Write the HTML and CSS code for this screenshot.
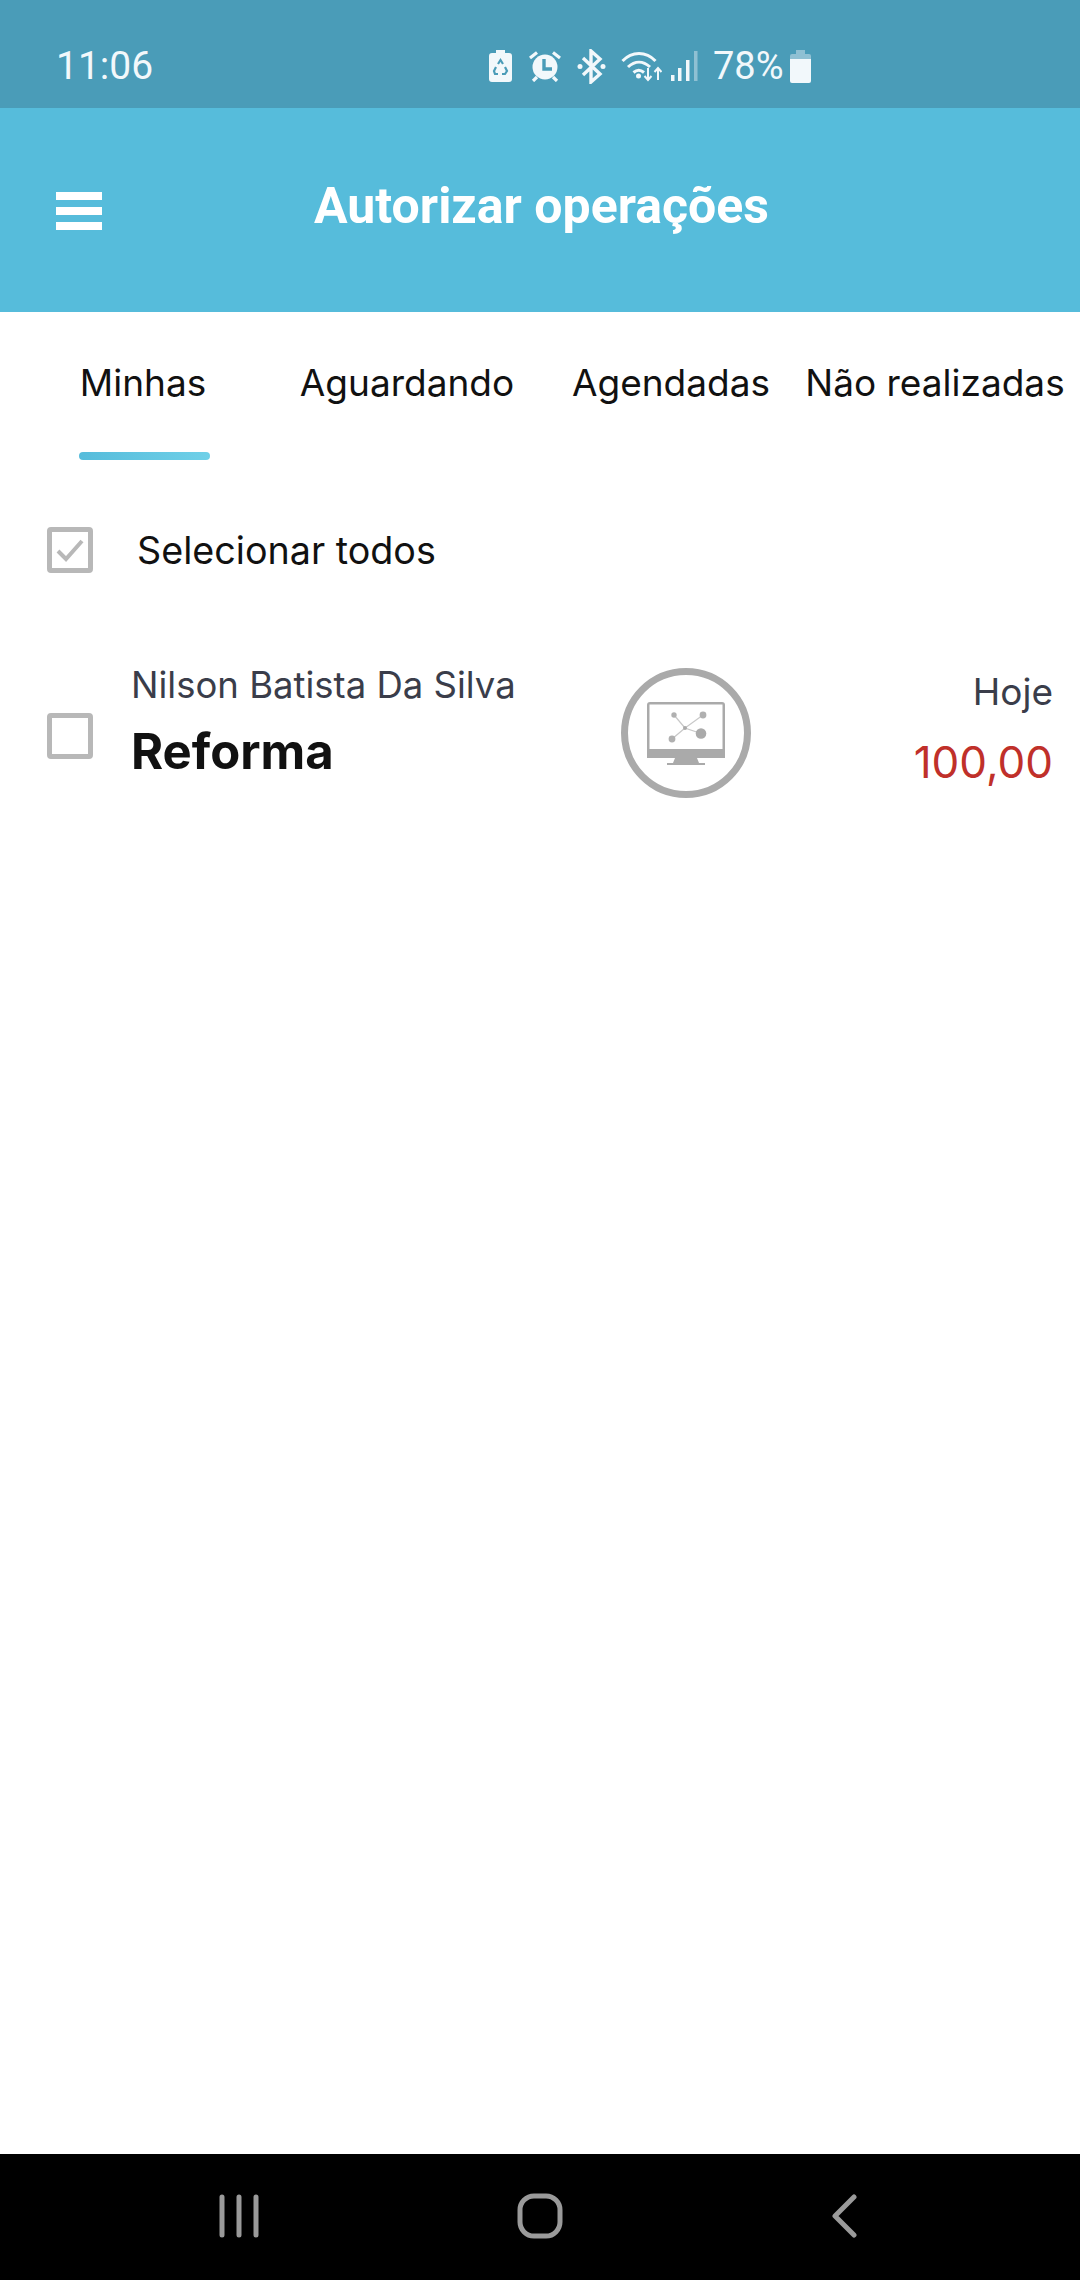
FILE: index.html
```html
<!DOCTYPE html>
<html lang="pt">
<head>
    <meta charset="UTF-8">
    <meta name="viewport" content="width=device-width, initial-scale=1.0">
    <title>Autorizar operações</title>
    <link rel="stylesheet" href="styles.css">
</head>
<body>

    <!-- Status bar -->
    <div class="status-bar">
        <span class="status-time">11:06</span>
        <div class="status-icons">
            <svg class="icon-recycle" width="23" height="32" viewBox="0 0 23 32">
                <path d="M7 0h9v3h4a3 3 0 0 1 3 3v23a3 3 0 0 1-3 3H3a3 3 0 0 1-3-3V6a3 3 0 0 1 3-3h4z" fill="#f2f8fb"/>
                <path d="M9 14l2.500-4 2.500 4M16 17l2 4-2 3h-3M9 24H6l-1-3 2-4" stroke="#4a9cb8" stroke-width="2.200" fill="none"/>
            </svg>
            <svg class="icon-alarm" width="34" height="31" viewBox="0 0 34 31">
                <circle cx="17" cy="16" r="12.500" fill="#f2f8fb"/>
                <path d="M16 8v10h8" stroke="#4a9cb8" stroke-width="3.400" fill="none"/>
                <path d="M2 7l7-5.500M32 7l-7-5.500M9 26l-4 4M25 26l4 4" stroke="#f2f8fb" stroke-width="3.200" fill="none"/>
            </svg>
            <svg class="icon-bt" width="29" height="35" viewBox="0 0 29 35">
                <path d="M6 9l17 16-9 8V2l9 8L6 26" stroke="#f2f8fb" stroke-width="3.400" fill="none"/>
                <circle cx="3" cy="17.500" r="2.500" fill="#f2f8fb"/>
                <circle cx="26" cy="17.500" r="2.500" fill="#f2f8fb"/>
            </svg>
            <svg class="icon-wifi" width="41" height="32" viewBox="0 0 41 32">
                <path d="M1.500 11C11 1 25 1 34.500 11M7 17c7-6.500 15-6.500 22 0M12.500 22.500c3.500-3 7-3 10.500 0" stroke="#f2f8fb" stroke-width="3" fill="none"/>
                <circle cx="17.500" cy="26" r="2.500" fill="#f2f8fb"/>
                <path d="M27 18v12M23.500 26l3.500 4 3.500-4M37 30V18M33.500 22l3.500-4 3.500 4" stroke="#f2f8fb" stroke-width="2" fill="none"/>
            </svg>
            <svg class="icon-signal" width="27" height="30" viewBox="0 0 27 30">
                <rect x="0" y="24" width="3.500" height="6" fill="#f2f8fb"/>
                <rect x="7" y="17" width="3.500" height="13" fill="#f2f8fb"/>
                <rect x="15" y="9" width="3.500" height="21" fill="#f2f8fb"/>
                <rect x="23" y="0" width="3.500" height="30" fill="#8fc0d3"/>
            </svg>
            <span class="status-percent">78%</span>
            <svg class="icon-battery" width="21" height="33" viewBox="0 0 21 33">
                <path d="M6 0h9v4H6z" fill="#8fc0d3"/>
                <path d="M2 4h17a2 2 0 0 1 2 2v3H0V6a2 2 0 0 1 2-2z" fill="#8fc0d3"/>
                <path d="M0 9h21v22a2 2 0 0 1-2 2H2a2 2 0 0 1-2-2z" fill="#f2f8fb"/>
            </svg>
        </div>
    </div>

    <!-- App bar -->
    <div class="app-bar">
        <div class="menu-icon">
            <span></span>
            <span></span>
            <span></span>
        </div>
        <h1>Autorizar operações</h1>
    </div>

    <!-- Tabs -->
    <div class="tabs">
        <div class="tab active">Minhas</div>
        <div class="tab">Aguardando</div>
        <div class="tab">Agendadas</div>
        <div class="tab">Não realizadas</div>
    </div>

    <div class="content">
        <div class="select-all">
            <div class="checkbox">
                <svg width="30" height="26" viewBox="0 0 30 26">
                    <path d="M3 14l8 8L27 4" stroke="#b8b8b8" stroke-width="4" fill="none"/>
                </svg>
            </div>
            <span>Selecionar todos</span>
        </div>

        <div class="operation">
            <div class="checkbox"></div>
            <div class="operation-text">
                <div class="operation-name">Nilson Batista Da Silva</div>
                <div class="operation-title">Reforma</div>
            </div>
            <div class="operation-icon">
                <svg width="78" height="63" viewBox="0 0 78 63">
                    <path d="M3 0h72a3 3 0 0 1 3 3v53H0V3a3 3 0 0 1 3-3z" fill="#aaa"/>
                    <rect x="2.500" y="2.500" width="73" height="44.500" fill="#fff"/>
                    <path d="M27 13l11 13M56 13L38 26l16 5.500M38 26L25 37" stroke="#c8c8c8" stroke-width="1.200" fill="none"/>
                    <circle cx="27" cy="13" r="2.700" fill="#b0b0b0"/>
                    <circle cx="56" cy="13" r="3.400" fill="#b0b0b0"/>
                    <circle cx="38" cy="26" r="2" fill="#aaa"/>
                    <circle cx="54" cy="31.500" r="5.300" fill="#aaa"/>
                    <circle cx="25" cy="37" r="3.400" fill="#b0b0b0"/>
                    <path d="M28 56h22l2 5H26z" fill="#aaa"/>
                    <rect x="20" y="61" width="38" height="2" fill="#aaa"/>
                </svg>
            </div>
            <div class="operation-values">
                <div class="operation-date">Hoje</div>
                <div class="operation-amount">100,00</div>
            </div>
        </div>
    </div>

    <!-- Navigation bar -->
    <div class="nav-bar">
        <svg width="40" height="44" viewBox="0 0 40 44">
            <path d="M3 3v38M20 3v38M37 3v38" stroke="#9a9a9a" stroke-width="5" stroke-linecap="round" fill="none"/>
        </svg>
        <svg class="nav-home" width="46" height="46" viewBox="0 0 46 46">
            <rect x="3" y="3" width="40" height="40" rx="14" stroke="#9a9a9a" stroke-width="5" fill="none"/>
        </svg>
        <svg width="26" height="44" viewBox="0 0 26 44">
            <path d="M23 3L4 22l19 19" stroke="#9a9a9a" stroke-width="5" stroke-linecap="round" stroke-linejoin="round" fill="none"/>
        </svg>
    </div>

</body>
</html>
```
FILE: styles.css
```css
body {
    margin: 0;
    height: 2280px;
    display: flex;
    flex-direction: column;
    background: #fff;
    font-family: "Inter", sans-serif;
    color: #111;
    overflow: hidden;
}
.status-bar {
    height: 108px;
    box-sizing: border-box;
    flex-shrink: 0;
    display: flex;
    align-items: center;
    padding: 24px 0 0 56px;
    background: #4a9cb8;
    color: #f2f8fb;
    font-family: "Roboto", sans-serif;
    font-size: 38px;
}
.status-time {
    width: 433px;
    font-size: 39px;
}
.status-icons {
    display: flex;
    align-items: center;
}
.icon-recycle {
    margin-right: 16px;
}
.icon-alarm {
    margin-right: 15px;
}
.icon-bt {
    margin-right: 15px;
}
.icon-wifi {
    margin-right: 9px;
}
.icon-signal {
    margin-right: 15px;
}
.status-percent {
    margin-right: 6px;
}
.app-bar {
    height: 204px;
    box-sizing: border-box;
    flex-shrink: 0;
    display: flex;
    align-items: center;
    padding-left: 56px;
    background: #56bcdb;
    color: #fff;
}
.app-bar h1 {
    margin: 0 0 8px 0;
    padding-left: 212px;
    font-family: "Roboto", sans-serif;
    font-size: 50px;
    font-weight: 700;
}
.menu-icon {
    width: 46px;
    display: flex;
    flex-direction: column;
    gap: 7px;
    margin-top: 2px;
}
.menu-icon span {
    height: 8px;
    background: #fff;
}
.tabs {
    display: grid;
    grid-template-columns: repeat(4, 1fr);
    padding: 0 13px 0 11px;
    height: 148px;
    flex-shrink: 0;
}
.tab {
    position: relative;
    text-align: center;
    padding-top: 49px;
    font-size: 37px;
    line-height: 44px;
    color: #111;
    white-space: nowrap;
}
.tab.active::after {
    content: "";
    position: absolute;
    left: 68px;
    top: 140px;
    width: 131px;
    height: 8px;
    border-radius: 4px;
    background: linear-gradient(90deg, #56bcdb, #6fd0e8);
}
.content {
    flex: 1;
}
.checkbox {
    width: 46px;
    height: 46px;
    box-sizing: border-box;
    flex-shrink: 0;
    border: 5px solid #b8b8b8;
    border-radius: 4px;
    display: flex;
    align-items: center;
    justify-content: center;
}
.select-all {
    display: flex;
    align-items: center;
    margin-top: 67px;
    padding-left: 47px;
    font-size: 37.700px;
}
.select-all span {
    margin-left: 44px;
}
.operation {
    display: flex;
    align-items: center;
    margin-top: 95px;
    padding: 0 27px 0 47px;
    height: 130px;
}
.operation .checkbox {
    margin-top: 6px;
}
.operation-text {
    margin-left: 38px;
    width: 490px;
}
.operation-name {
    font-size: 36.500px;
    line-height: 44px;
    color: #3a3d4a;
    margin-bottom: 17px;
}
.operation-title {
    font-size: 49px;
    line-height: 56px;
    font-weight: 700;
    margin-bottom: 23px;
}
.operation-icon {
    width: 130px;
    height: 130px;
    box-sizing: border-box;
    flex-shrink: 0;
    border: 7px solid #aaa;
    border-radius: 50%;
    display: flex;
    align-items: center;
    justify-content: center;
}
.operation-values {
    flex: 1;
    text-align: right;
}
.operation-date {
    font-size: 37px;
    line-height: 44px;
    color: #3a3d4a;
    margin-bottom: 24px;
}
.operation-amount {
    font-size: 44px;
    line-height: 48px;
    color: #c0302a;
    margin-bottom: 10px;
}
.nav-bar {
    height: 126px;
    box-sizing: border-box;
    flex-shrink: 0;
    display: flex;
    align-items: center;
    justify-content: space-between;
    padding: 0 223px 3px 219px;
    background: #000;
}
.nav-home {
    margin-right: 10px;
}
```
